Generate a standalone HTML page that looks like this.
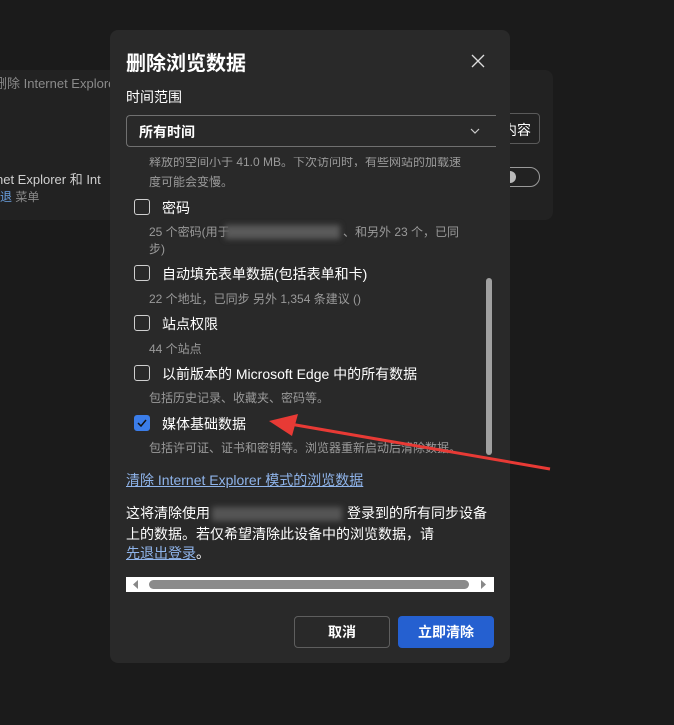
<!DOCTYPE html>
<html><head><meta charset="utf-8"><style>
*{margin:0;padding:0;box-sizing:border-box}
body{width:674px;height:725px;background:#1b1b1b;font-family:"Liberation Sans","Noto Sans CJK SC",sans-serif;position:relative;overflow:hidden;color:#fff}
.abs{position:absolute;white-space:nowrap}
.card{position:absolute;left:-10px;top:70px;width:563px;height:150px;background:#222;border-radius:8px}
.dlg{position:absolute;left:110px;top:30px;width:400px;height:633px;background:#292929;border-radius:8px}
.cb{position:absolute;left:134px;width:16px;height:16px;border:1px solid #cfcfcf;border-radius:3px}
.lbl{font-size:14px;color:#fff}
.sub{font-size:12px;color:#9a9a9a}
.blur{position:absolute;background:#5a5a5a;filter:blur(3px)}
</style></head><body>
<div class="card"></div>
<div class="abs" style="left:-6px;top:73px;font-size:13px;color:#8a8a8a">删除 Internet Explorer</div>
<div class="abs" style="left:-4px;top:169px;font-size:13px;color:#cfcfcf">net Explorer 和 Int</div>
<div class="abs" style="left:0;top:188px;font-size:12px;color:#8a8a8a"><span style="color:#6aa0e0">退</span> 菜单</div>
<div class="abs" style="left:494px;top:113px;width:46px;height:31px;border:1px solid #5a5a5a;border-radius:4px;font-size:14px;padding:6px 0 0 8px">内容</div>
<div class="abs" style="left:496px;top:167px;width:44px;height:20px;border:1px solid #9a9a9a;border-radius:10px"></div>
<div class="abs" style="left:504px;top:171px;width:12px;height:12px;background:#bbb;border-radius:6px"></div>
<div class="dlg"></div>
<div class="abs" style="left:126px;top:47px;font-size:20px;font-weight:bold">删除浏览数据</div>
<svg class="abs" style="left:471px;top:54px" width="14" height="14"><path d="M1 1L13 13M13 1L1 13" stroke="#ddd" stroke-width="1.3"/></svg>
<div class="abs" style="left:126px;top:87px;font-size:14px">时间范围</div>
<div class="abs" style="left:126px;top:115px;width:370px;height:32px;border:1px solid #707070;border-right:none;border-radius:4px 0 0 4px;background:#292929"></div>
<div class="abs" style="left:139px;top:122px;font-size:14px;font-weight:bold">所有时间</div>
<svg class="abs" style="left:470px;top:127px" width="10" height="8"><path d="M1 2L5 6L9 2" stroke="#ccc" fill="none" stroke-width="1.2"/></svg>
<div class="abs sub" style="left:149px;height:10px;overflow:hidden;line-height:10px;top:157px">释放的空间小于 41.0 MB。下次访问时，有些网站的加载速</div>
<div class="abs sub" style="left:149px;top:173px">度可能会变慢。</div>
<div class="cb" style="top:199px"></div><div class="abs lbl" style="left:162px;top:198px">密码</div>
<div class="abs sub" style="left:149px;top:223px">25 个密码(用于</div>
<div class="blur" style="left:225px;top:225px;width:115px;height:14px"></div>
<div class="abs sub" style="left:343px;top:223px">、和另外 23 个，已同</div>
<div class="abs sub" style="left:149px;top:240px">步)</div>
<div class="cb" style="top:265px"></div><div class="abs lbl" style="left:162px;top:264px">自动填充表单数据(包括表单和卡)</div>
<div class="abs sub" style="left:149px;top:290px">22 个地址，已同步 另外 1,354 条建议 ()</div>
<div class="cb" style="top:315px"></div><div class="abs lbl" style="left:162px;top:314px">站点权限</div>
<div class="abs sub" style="left:149px;top:340px">44 个站点</div>
<div class="cb" style="top:365px"></div><div class="abs lbl" style="left:162px;top:364px">以前版本的 Microsoft Edge 中的所有数据</div>
<div class="abs sub" style="left:149px;top:389px">包括历史记录、收藏夹、密码等。</div>
<div class="cb" style="top:415px;background:#3b7de9;border-color:#3b7de9"></div>
<svg class="abs" style="left:137px;top:419px" width="10" height="8"><path d="M1 4L4 7L9 1" stroke="#111" fill="none" stroke-width="1.5"/></svg>
<div class="abs lbl" style="left:162px;top:414px">媒体基础数据</div>
<div class="abs sub" style="left:149px;top:439px">包括许可证、证书和密钥等。浏览器重新启动后清除数据。</div>
<div class="abs" style="left:486px;top:278px;width:6px;height:177px;background:#a0a0a0;border-radius:3px"></div>
<div class="abs" style="left:126px;top:470px;font-size:14px;color:#8fb4ea;text-decoration:underline">清除 Internet Explorer 模式的浏览数据</div>
<div class="abs" style="left:126px;top:503px;font-size:14px;line-height:21px">这将清除使用</div>
<div class="blur" style="left:212px;top:507px;width:130px;height:14px;background:#555"></div>
<div class="abs" style="left:347px;top:503px;font-size:14px;line-height:21px">登录到的所有同步设备</div>
<div class="abs" style="left:126px;top:524px;font-size:14px;line-height:21px">上的数据。若仅希望清除此设备中的浏览数据，请</div>
<div class="abs" style="left:126px;top:543px;font-size:14px;line-height:21px"><span style="color:#8fb4ea;text-decoration:underline">先退出登录</span>。</div>
<div class="abs" style="left:126px;top:577px;width:368px;height:15px;background:#fff"></div>
<div class="abs" style="left:149px;top:580px;width:320px;height:9px;background:#8a8a8a;border-radius:5px"></div>
<svg class="abs" style="left:132px;top:579px" width="8" height="11"><path d="M6 1L1 5.5L6 10Z" fill="#888"/></svg>
<svg class="abs" style="left:479px;top:579px" width="8" height="11"><path d="M2 1L7 5.5L2 10Z" fill="#888"/></svg>
<div class="abs" style="left:294px;top:616px;width:96px;height:32px;border:1px solid #5e5e5e;border-radius:4px;font-size:14px;font-weight:bold;text-align:center;line-height:30px">取消</div>
<div class="abs" style="left:398px;top:616px;width:96px;height:32px;background:#2560d0;border-radius:4px;font-size:14px;font-weight:bold;text-align:center;line-height:32px">立即清除</div>
<svg class="abs" style="left:0;top:0" width="674" height="725"><path d="M550 469L290 424" stroke="#e83a35" stroke-width="3"/><path d="M269 421L298 414L292 436Z" fill="#e83a35"/></svg>
</body></html>
